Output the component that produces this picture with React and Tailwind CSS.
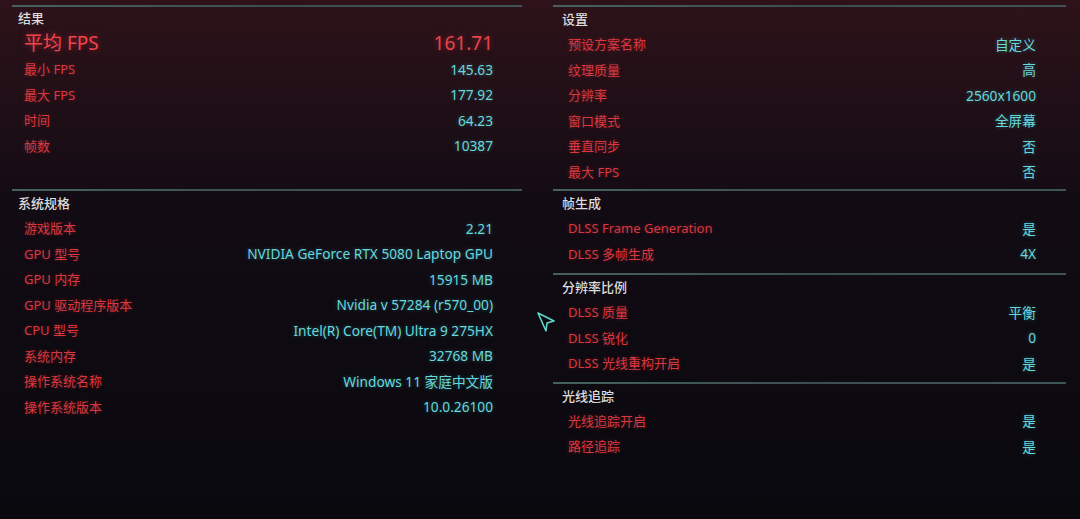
import React from "react";

const font = { fontFamily: '"Noto Sans", "Noto Sans CJK SC", sans-serif' };

function Row({ label, value, big }) {
  return (
    <div className={big ? "flex items-center justify-between h-[28px]" : "flex items-center justify-between h-[25.5px]"}>
      <span
        className={
          big
            ? "text-[19px] leading-none text-[#f3434b] [text-shadow:0_0_6px_rgba(240,60,70,0.5)]"
            : "text-[13px] leading-none text-[#d9383f] [text-shadow:0_0_4px_rgba(220,50,60,0.35)]"
        }
      >
        {label}
      </span>
      <span
        className={
          big
            ? "text-[19px] leading-none text-[#e8444c] [text-shadow:0_0_6px_rgba(240,60,70,0.45)]"
            : "text-[13.7px] leading-none text-[#66d9dd] [text-shadow:0_0_4px_rgba(90,220,225,0.35)]"
        }
      >
        {value}
      </span>
    </div>
  );
}

function Section({ title, titleH, rows, bigRow, titlePl, rowPl, rowPr, className }) {
  return (
    <div className={className}>
      <div className="h-[2px] bg-gradient-to-r from-[#46605f] via-[#3a4f52] to-[#3e5557]" />
      <div className={`flex items-center ${titleH} ${titlePl}`}>
        <span className="text-[13px] leading-none text-[#dcdcdc] font-medium">{title}</span>
      </div>
      <div className={`${rowPl} ${rowPr}`}>
        {bigRow && <Row big label={bigRow[0]} value={bigRow[1]} />}
        {rows.map(([l, v]) => (
          <Row key={l} label={l} value={v} />
        ))}
      </div>
    </div>
  );
}

export default function App() {
  return (
    <div
      style={font}
      className="relative w-[1080px] h-[519px] overflow-hidden bg-gradient-to-b from-[#2e1219] via-[#120b14] via-40% to-[#09090e]"
    >
      <div className="flex pl-[12px] pt-[5px]">
        <div className="w-[510px]">
          <Section
            title="结果"
            titleH="h-[22px]"
            titlePl="pl-[6px]"
            rowPl="pl-[12px]"
            rowPr="pr-[29px]"
            bigRow={["平均 FPS", "161.71"]}
            rows={[
              ["最小 FPS", "145.63"],
              ["最大 FPS", "177.92"],
              ["时间", "64.23"],
              ["帧数", "10387"],
            ]}
          />
          <Section
            className="mt-[30px]"
            title="系统规格"
            titleH="h-[25px]"
            titlePl="pl-[6px]"
            rowPl="pl-[12px]"
            rowPr="pr-[29px]"
            rows={[
              ["游戏版本", "2.21"],
              ["GPU 型号", "NVIDIA GeForce RTX 5080 Laptop GPU"],
              ["GPU 内存", "15915 MB"],
              ["GPU 驱动程序版本", "Nvidia v 57284 (r570_00)"],
              ["CPU 型号", "Intel(R) Core(TM) Ultra 9 275HX"],
              ["系统内存", "32768 MB"],
              ["操作系统名称", "Windows 11 家庭中文版"],
              ["操作系统版本", "10.0.26100"],
            ]}
          />
        </div>
        <div className="w-[513px] ml-[31px]">
          <Section
            title="设置"
            titleH="h-[25px]"
            titlePl="pl-[9px]"
            rowPl="pl-[15px]"
            rowPr="pr-[30px]"
            rows={[
              ["预设方案名称", "自定义"],
              ["纹理质量", "高"],
              ["分辨率", "2560x1600"],
              ["窗口模式", "全屏幕"],
              ["垂直同步", "否"],
              ["最大 FPS", "否"],
            ]}
          />
          <Section
            className="mt-[4px]"
            title="帧生成"
            titleH="h-[25px]"
            titlePl="pl-[9px]"
            rowPl="pl-[15px]"
            rowPr="pr-[30px]"
            rows={[
              ["DLSS Frame Generation", "是"],
              ["DLSS 多帧生成", "4X"],
            ]}
          />
          <Section
            className="mt-[6px]"
            title="分辨率比例"
            titleH="h-[25px]"
            titlePl="pl-[9px]"
            rowPl="pl-[15px]"
            rowPr="pr-[30px]"
            rows={[
              ["DLSS 质量", "平衡"],
              ["DLSS 锐化", "0"],
              ["DLSS 光线重构开启", "是"],
            ]}
          />
          <Section
            className="mt-[5px]"
            title="光线追踪"
            titleH="h-[25px]"
            titlePl="pl-[9px]"
            rowPl="pl-[15px]"
            rowPr="pr-[30px]"
            rows={[
              ["光线追踪开启", "是"],
              ["路径追踪", "是"],
            ]}
          />
        </div>
      </div>
      <svg className="absolute left-[535px] top-[310px]" width="22" height="24" viewBox="0 0 22 24">
        <path
          d="M3 3 L19 11 L12 13 L11 21 Z"
          fill="none"
          stroke="#5fd8c8"
          strokeWidth="1.6"
          strokeLinejoin="round"
        />
      </svg>
    </div>
  );
}
